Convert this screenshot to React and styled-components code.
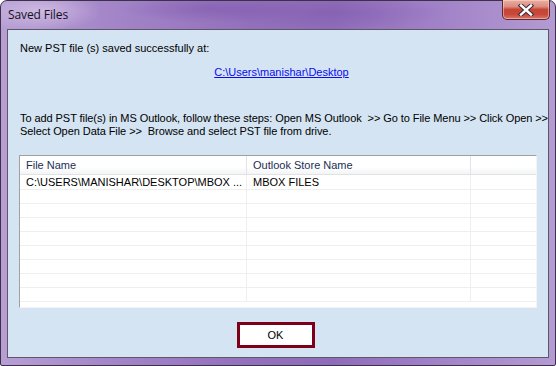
import styled, { createGlobalStyle } from "styled-components";

const Global = createGlobalStyle`
  html, body { margin: 0; padding: 0; }
  body { width: 556px; height: 366px; overflow: hidden; background: #ffffff; }
`;

const rows = [
  { file: "C:\\USERS\\MANISHAR\\DESKTOP\\MBOX ...", store: "MBOX FILES" },
  {}, {}, {}, {}, {}, {}, {}, {},
];

const App = () => {
  return (
    <Window>
      <Global />
      {/* title bar */}
      <TitleBar>
        <Title>Saved Files</Title>
        <CloseButton>
          <svg width="18" height="12" viewBox="0 0 18 12">
            <path d="M4 1.5 L14 10.5 M14 1.5 L4 10.5" stroke="#3b2a3a" strokeWidth="4.4" strokeLinecap="square" />
            <path d="M4 1.5 L14 10.5 M14 1.5 L4 10.5" stroke="#ffffff" strokeWidth="2.4" strokeLinecap="square" />
          </svg>
        </CloseButton>
      </TitleBar>

      {/* client area */}
      <Client>
        <Text>New PST file (s) saved successfully at:</Text>
        <LinkRow>
          <PathLink>C:\Users\manishar\Desktop</PathLink>
        </LinkRow>
        <Steps>
          To add PST file(s) in MS Outlook, follow these steps: Open MS Outlook &nbsp;&gt;&gt; Go to File Menu &gt;&gt; Click Open &gt;&gt;
          <br />
          Select Open Data File &gt;&gt; &nbsp;Browse and select PST file from drive.
        </Steps>

        <Table>
          <HeaderRow>
            <HeadCell $w={227}>File Name</HeadCell>
            <HeadCell $w={224}>Outlook Store Name</HeadCell>
            <HeadCell $last />
          </HeaderRow>
          {rows.map((r, i) => (
            <Row key={i} $first={i === 0}>
              <Cell $w={227}>{r.file}</Cell>
              <Cell $w={224}>{r.store}</Cell>
              <Cell $last />
            </Row>
          ))}
        </Table>

        <Footer>
          <OkButton>OK</OkButton>
        </Footer>
      </Client>
    </Window>
  );
};

const Window = styled.div`
  box-sizing: border-box;
  width: 556px;
  height: 366px;
  display: flex;
  flex-direction: column;
  padding: 0 6px 7px 6px;
  border: 1px solid #3c3148;
  border-radius: 7px 7px 2px 2px;
  background:
    radial-gradient(ellipse 90px 14px at 210px 8px, rgba(120, 80, 170, 0.45), transparent),
    radial-gradient(ellipse 120px 16px at 330px 12px, rgba(120, 80, 170, 0.35), transparent),
    radial-gradient(ellipse 60px 20px at 40px 10px, rgba(230, 215, 240, 0.55), transparent),
    linear-gradient(to right, #b79fd4 0%, #a385c8 20%, #9370bb 45%, #8f6cb9 60%, #a283c8 80%, #b49bd2 100%);
  font-family: "Liberation Sans", Arial, sans-serif;
`;

const TitleBar = styled.div`
  height: 28px;
  display: flex;
  justify-content: space-between;
  align-items: flex-start;
`;

const Title = styled.div`
  padding: 5px 0 0 1px;
  font-family: "Open Sans", "Noto Sans", sans-serif;
  font-size: 12px;
  color: #15111c;
  letter-spacing: -0.1px;
`;

const CloseButton = styled.div`
  box-sizing: border-box;
  width: 48px;
  height: 20px;
  margin-top: -1px;
  margin-right: -1px;
  display: flex;
  align-items: center;
  justify-content: center;
  border: 1px solid #5b2b2e;
  border-top: none;
  border-radius: 0 0 5px 5px;
  background: linear-gradient(
    to bottom,
    #eab0a4 0%,
    #dc8c7e 35%,
    #c54634 50%,
    #c8473a 75%,
    #d8766a 100%
  );
  box-shadow: inset 0 0 0 1px rgba(255, 220, 210, 0.5);
`;

const Client = styled.div`
  flex: 1;
  display: flex;
  flex-direction: column;
  padding: 12px 12px 0 11px;
  border: 1px solid #5d5866;
  background: #d4e4f2;
  font-size: 11px;
  color: #000000;
`;

const Text = styled.div`
  padding-left: 1px;
  line-height: 13px;
`;

const LinkRow = styled.div`
  display: flex;
  justify-content: center;
  padding: 11px 0 0 8px;
  line-height: 13px;
`;

const PathLink = styled.span`
  color: #0b0bf0;
  text-decoration: underline;
`;

const Steps = styled.div`
  padding: 33px 0 0 1px;
  line-height: 13px;
  white-space: nowrap;
  letter-spacing: -0.07px;
`;

const Table = styled.div`
  box-sizing: border-box;
  margin-top: 17px;
  width: 518px;
  height: 153px;
  overflow: hidden;
  background: #ffffff;
  border-top: 1px solid #a0a0a0;
  border-left: 1px solid #a0a0a0;
  border-right: 1px solid #f4f4f4;
  border-bottom: 1px solid #f4f4f4;
`;

const HeaderRow = styled.div`
  display: flex;
  height: 18px;
  border-bottom: 1px solid #e2e2e2;
  background: linear-gradient(to bottom, #ffffff 0%, #ffffff 60%, #f3f4f6 100%);
`;

const HeadCell = styled.div`
  box-sizing: border-box;
  ${(p) => (p.$last ? "flex: 1;" : `width: ${p.$w}px;`)}
  padding: 3px 0 0 6px;
  border-right: ${(p) => (p.$last ? "none" : "1px solid #e3e4e6")};
  color: #1c2f55;
  line-height: 13px;
  white-space: nowrap;
`;

const Row = styled.div`
  display: flex;
  height: ${(p) => (p.$first ? "14px" : "13px")};
  border-bottom: 1px solid #efefef;
`;

const Cell = styled.div`
  box-sizing: border-box;
  ${(p) => (p.$last ? "flex: 1;" : `width: ${p.$w}px;`)}
  padding: 1px 0 0 6px;
  border-right: ${(p) => (p.$last ? "none" : "1px solid #efefef")};
  line-height: 13px;
  white-space: nowrap;
  overflow: hidden;
`;

const Footer = styled.div`
  display: flex;
  justify-content: center;
  padding: 14px 4px 0 0;
`;

const OkButton = styled.button`
  box-sizing: border-box;
  width: 78px;
  height: 26px;
  padding: 0;
  border: 3px solid #7d0018;
  background: #ffffff;
  font-family: "Liberation Sans", Arial, sans-serif;
  font-size: 11px;
  color: #000000;
`;

export default App;
